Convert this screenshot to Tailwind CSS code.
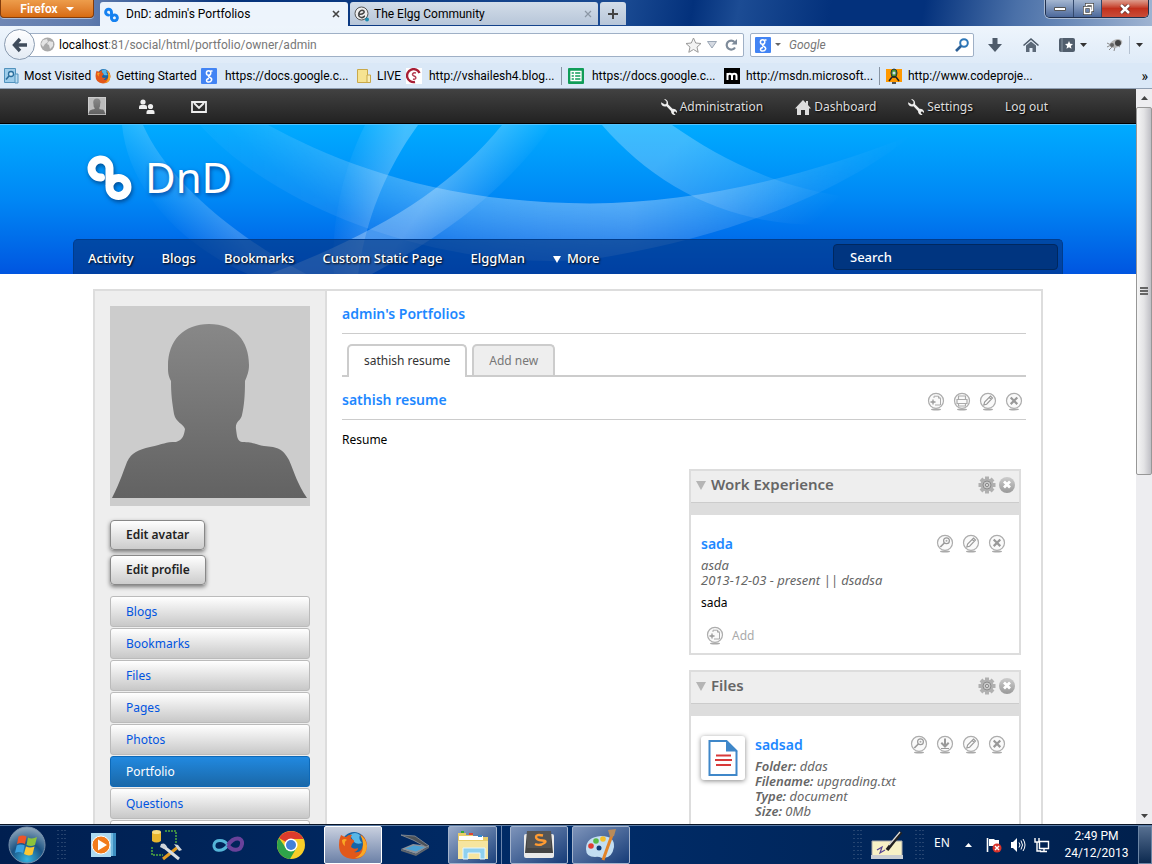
<!DOCTYPE html>
<html lang="en">
<head>
<meta charset="utf-8">
<title>DnD: admin's Portfolios</title>
<script src="https://cdn.jsdelivr.net/npm/@tailwindcss/browser@4"></script>
</head>
<body class="flex h-screen flex-col overflow-hidden bg-white font-['Noto_Sans','Open_Sans',sans-serif] text-[12px] text-black">

<svg width="0" height="0" class="absolute" aria-hidden="true">
  <defs>
    <linearGradient id="person" x1="0" y1="0" x2="0" y2="1"><stop offset="0" stop-color="#888"/><stop offset="1" stop-color="#626262"/></linearGradient>
    <linearGradient id="ball" x1="0" y1="0" x2="0" y2="1"><stop offset="0" stop-color="#ccc"/><stop offset="1" stop-color="#999"/></linearGradient>
    <symbol id="avatar" viewBox="0 0 200 200"><path fill="url(#person)" d="M2 192C11 174 13 166 17 156C22 146 28 144 40 141C54 138 55 136 66 136C73 134 74 129 75 123C73 117 66 117 64 108C62 96 61 88 61 75C58 69 58 66 58 60C58 34 74 18 99 18C125 18 139 35 139 59C139 66 137 70 135 75C135 90 134 100 132 109C131 115 125 115 126 123C127 130 127 135 132 136C142 136 145 138 154 140C168 141 173 143 179 154C185 168 187 177 197 192Z"/></symbol>
    <symbol id="disc" viewBox="0 0 18 20"><ellipse cx="9" cy="17.400" rx="5" ry="1" fill="#aaa"/><circle cx="9" cy="8.800" r="7.500" fill="#fafafa" stroke="#adadad" stroke-width="1.200"/></symbol>
    <symbol id="a-add" viewBox="0 0 18 20"><use href="#disc"/><path d="M7 6V4.200h4.500l2 2V13H8M11.500 4.200v2h2" fill="none" stroke="#aaa"/><path d="M3.500 10h5M6 7.500v5" stroke="#999" stroke-width="1.300"/></symbol>
    <symbol id="a-print" viewBox="0 0 18 20"><use href="#disc"/><path d="M5.500 7V4h7v3M4 7.500h10v4H4zM5.500 11.500V14h7v-2.500" fill="none" stroke="#aaa" stroke-width="1.200"/></symbol>
    <symbol id="a-edit" viewBox="0 0 18 20"><use href="#disc"/><path d="M4.800 13l.8-3L11.500 4l2 2L7.600 12.200zM10.200 5.400l2 2" fill="none" stroke="#999" stroke-width="1.100"/></symbol>
    <symbol id="a-del" viewBox="0 0 18 20"><use href="#disc"/><path d="M5.700 5.500l6.600 6.600M12.300 5.500l-6.600 6.600" stroke="#999" stroke-width="2.200"/></symbol>
    <symbol id="a-view" viewBox="0 0 18 20"><use href="#disc"/><circle cx="10.500" cy="6.800" r="2.900" fill="none" stroke="#999" stroke-width="1.200"/><circle cx="10.500" cy="6.800" r="1" fill="#aaa"/><path d="M8.300 9l-4 4" stroke="#999" stroke-width="1.600"/></symbol>
    <symbol id="a-down" viewBox="0 0 18 20"><use href="#disc"/><path d="M9 3.500V11M5.300 7.800L9 11.500l3.700-3.700" fill="none" stroke="#999" stroke-width="2"/><path d="M5 13.500h8" stroke="#999"/></symbol>
    <symbol id="gear" viewBox="0 0 18 18"><g fill="#b0b0b0"><circle cx="9" cy="9" r="6.500"/><path d="M7 .5h4v17H7zM.5 7h17v4H.5z"/><path d="M7 .5h4v17H7zM.5 7h17v4H.5z" transform="rotate(45 9 9)"/></g><circle cx="9" cy="9" r="4" fill="#c8c8c8" stroke="#8d8d8d"/><circle cx="9" cy="9" r="1.600" fill="#ddd" stroke="#888"/></symbol>
    <symbol id="close" viewBox="0 0 18 18"><circle cx="9" cy="9" r="8" fill="url(#ball)"/><path d="M6 5.500l6 6M12 5.500l-6 6" stroke="#fff" stroke-width="2.800"/></symbol>
    <symbol id="wrench" viewBox="0 0 16 16"><path fill="#eee" d="M3 0l2.500 2.500v2L4 5.500 0 3.200C0 7 3 8 5.500 7.200L10 12c0 3 2.500 4.500 4.500 3.800L12.800 14l.2-1.300 1.300-.3 1.700 1.700c.5-2.500-1.500-4.500-4.500-4.300L7 5.300C7.700 2.500 5.700 0 3 0z"/></symbol>
    <symbol id="google" viewBox="0 0 16 16"><rect width="16" height="16" rx="1" fill="#4284f4"/><g fill="none" stroke="#fff" stroke-width="1.500"><ellipse cx="7.600" cy="5" rx="2.200" ry="2.300"/><path d="M9.500 3h2M9 7c-2 1-2 1.500 0 2.500C12 11 10.500 14 7.800 14 5 14 4.500 11 8 10.500"/></g></symbol>
    <symbol id="firefox" viewBox="0 0 30 30"><circle cx="16" cy="14" r="12" fill="#1565a8"/><path d="M12 5q5-4 10 0-2 4 2 8-5 2-8-1z" fill="#58b7e8"/><path fill="#e2581a" d="M3 5Q6 7 8 7Q11 4 14 5Q12 7 13 9Q17 10 16 12Q13 14 13 17Q16 20 20 18Q20 21 16 22Q24 24 25 14Q25 8 22 4Q29 8 29 16Q28 29 15 29Q1 28 1 15Q1 9 3 5Z"/><path fill="#f9a825" d="M29 16q-1 12-12 12 8-3 8-13 0-6-3-10 6 3 7 11zM4 10q3-2 5 0-3 1-2 6-3-2-3-6z"/></symbol>
    <symbol id="grip" viewBox="0 0 9 30"><g stroke="#4a6588" stroke-width="1" stroke-dasharray="1 3"><path d="M1 0v30M5 0v30M8 0v30"/></g></symbol>
  </defs>
</svg>

<!-- browser title bar and tabs -->
<div class="flex h-[26px] shrink-0 items-start bg-[linear-gradient(100deg,#6f87b4_0%,#5f7bad_8%,#04317a_20%,#1a4a92_54%,#03317c_60%,#1c4c94_64%,#03317c_72%,#03317c_80%,#4a70a8_88%,#9fb4d2_100%)] font-[Roboto,'Noto_Sans',sans-serif]">
  <button class="flex h-[18px] w-[94px] items-center justify-center gap-2 rounded-b-[4px] border border-t-0 border-[#833c0c] bg-linear-to-b from-[#ed9d4b] to-[#d76b0e] text-[12px] font-semibold text-white shadow-[0_1px_0_#aabbd8]">Firefox
    <svg class="h-1 w-2" viewBox="0 0 8 4"><path d="M0 0h8L4 4z" fill="#fff"/></svg></button>
  <div class="ml-[6px] mt-[2px] flex h-6 w-[248px] items-center gap-[7px] rounded-t-[3px] bg-[#edf4fc] pl-1 pr-2">
    <svg class="size-[15px]" viewBox="0 0 46 46"><path d="M14 25A9 9 0 1 1 23 16V32M23 32A9 9 0 1 0 23.200 31" fill="none" stroke="#1581f0" stroke-width="9" stroke-linecap="round"/></svg>
    <span class="flex-1 whitespace-nowrap">DnD: admin's Portfolios</span>
    <button aria-label="Close tab"><svg class="size-2" viewBox="0 0 8 8"><path d="M1 1l6 6M7 1L1 7" stroke="#444" stroke-width="1.600"/></svg></button>
  </div>
  <div class="ml-[2px] mt-[2px] flex h-[23px] w-[248px] items-center gap-1 rounded-t-[3px] bg-linear-to-b from-[#d3dde9] to-[#b7c6d9] pl-1 pr-[6px]">
    <svg class="size-4" viewBox="0 0 16 16"><circle cx="7.500" cy="7.500" r="6.500" fill="#eee" stroke="#555"/><path d="M4 8c5 1 8-2 5-3.500S3 9 6 11s4-1 5-1" fill="none" stroke="#444" stroke-width="1.500"/><circle cx="13" cy="13.500" r="2" fill="#1c8cb0"/></svg>
    <span class="flex-1 whitespace-nowrap">The Elgg Community</span>
    <button aria-label="Close tab"><svg class="size-2" viewBox="0 0 8 8"><path d="M1 1l6 6M7 1L1 7" stroke="#8b97a5" stroke-width="1.200"/></svg></button>
  </div>
  <button aria-label="New tab" class="ml-[2px] mt-[2px] flex h-[23px] w-[26px] items-center justify-center rounded-t-[3px] bg-linear-to-b from-[#d3dde9] to-[#b7c6d9]"><svg class="size-[10px]" viewBox="0 0 10 10"><path d="M5 0v10M0 5h10" stroke="#444" stroke-width="2"/></svg></button>
  <div class="ml-auto mr-[3px] flex h-[18px] overflow-hidden rounded-b-[5px] border border-t-0 border-[#20304d] shadow-[0_0_0_1px_#a9bad3]">
    <button aria-label="Minimize" class="flex w-7 items-center justify-center border-r border-[#33486b] bg-linear-to-b from-[#a5b7d1] to-[#4c689a]"><svg class="h-1 w-3" viewBox="0 0 12 4"><path d="M.5.500h11v3H.5z" fill="#fff" stroke="#555"/></svg></button>
    <button aria-label="Restore" class="flex w-7 items-center justify-center border-r border-[#33486b] bg-linear-to-b from-[#a5b7d1] to-[#4c689a]"><svg class="size-3" viewBox="0 0 12 12"><path d="M4.500 3V1.500h6v6H9M2.500 4.500h6v6h-6z" fill="none" stroke="#444" stroke-width="3"/><path d="M4.500 3V1.500h6v6H9M2.500 4.500h6v6h-6z" fill="none" stroke="#fff" stroke-width="1.600"/></svg></button>
    <button aria-label="Close" class="flex w-[46px] items-center justify-center bg-linear-to-b from-[#dc9c8d] via-[#c2301c] via-50% to-[#c94c38]"><svg class="h-[10px] w-3" viewBox="0 0 12 10"><path d="M2 1l8 8M10 1L2 9" stroke="#5a2a26" stroke-width="4"/><path d="M2 1l8 8M10 1L2 9" stroke="#fff" stroke-width="2.500"/></svg></button>
  </div>
</div>

<!-- navigation toolbar -->
<div class="flex h-[37px] shrink-0 items-center bg-linear-to-b from-[#eef5fc] to-[#dfebf8] pl-1 pr-[9px] font-[Roboto,'Noto_Sans',sans-serif]">
  <button aria-label="Back" class="z-10 flex size-[31px] shrink-0 items-center justify-center rounded-full border border-[#8a9bb0] bg-linear-to-b from-white to-[#e3ebf4]"><svg class="h-4 w-4" viewBox="0 0 16 16"><path d="M15 8H3M8 2L2.500 8 8 14" fill="none" stroke="#3f4c5b" stroke-width="3.400"/></svg></button>
  <div class="-ml-2 flex h-6 min-w-0 flex-1 items-center rounded-[2px] border border-[#9fb0c6] bg-white pl-[12px] pr-[6px]">
    <svg class="mr-1 size-[15px] shrink-0" viewBox="0 0 15 15"><circle cx="7.500" cy="7.500" r="7" fill="#aaa"/><path d="M3 3l4-1 1 3-3 2-2 3-2-3zM9 4l4 1v4l-3 3-1-4-2-1z" fill="#e4e4e4"/></svg>
    <label for="url" class="leading-5">localhost</label>
    <input id="url" class="h-5 w-0 flex-1 text-[12px] leading-5 text-[#777] outline-none" value=":81/social/html/portfolio/owner/admin">
    <svg class="h-4 w-[17px]" viewBox="0 0 17 16"><path d="M8.500 1l2.200 5 5.300.500-4 3.600 1.200 5.200-4.700-2.800-4.700 2.800L5 10.100 1 6.500 6.300 6z" fill="#f3f3f3" stroke="#999"/></svg>
    <svg class="ml-[5px] h-2 w-[10px]" viewBox="0 0 10 8"><path d="M.5.500h9L5 7z" fill="#d5dae2" stroke="#9aa6b5"/></svg>
    <svg class="ml-2 h-3 w-3" viewBox="0 0 12 12"><path d="M10 8.500A4.500 4.500 0 1 1 9.500 3" fill="none" stroke="#7e8b9a" stroke-width="2.200"/><path d="M12 0v5.500H6.500z" fill="#7e8b9a"/></svg>
  </div>
  <div class="ml-[6px] flex h-6 w-[224px] items-center rounded-[2px] border border-[#9fb0c6] bg-white pl-1 pr-1">
    <svg class="size-4"><use href="#google"/></svg>
    <svg class="ml-1 h-[3px] w-[6px]" viewBox="0 0 6 3"><path d="M0 0h6L3 3z" fill="#666"/></svg>
    <input aria-label="Search with Google" placeholder="Google" class="ml-2 w-0 flex-1 text-[12px] italic outline-none placeholder:text-[#777]">
    <svg class="size-[14px]" viewBox="0 0 14 14"><circle cx="9" cy="5" r="3.800" fill="none" stroke="#2e77b8" stroke-width="2"/><path d="M6 8l-5 5" stroke="#2c5f95" stroke-width="2.600"/></svg>
  </div>
  <svg class="ml-[14px] h-[14px] w-[14px]" viewBox="0 0 14 14"><path d="M4.500 0h5v6H14l-7 8-7-8h4.500z" fill="#4e5b6a"/></svg>
  <svg class="ml-[21px] h-[14px] w-4" viewBox="0 0 16 14"><path d="M8 0l8 7-1 1-7-6-7 6-1-1z" fill="#4e5b6a"/><path d="M3 7.500L8 3.500l5 4V14H9.500v-4h-3v4H3z" fill="#5c6978"/></svg>
  <svg class="ml-[20px] h-[14px] w-4" viewBox="0 0 16 14"><rect width="16" height="14" rx="2" fill="#515e6d"/><path d="M3 0v14" stroke="#8b97a5"/><path d="M10 3l1.200 2.700 2.800.300-2.100 1.900.6 2.900-2.500-1.500-2.500 1.500.6-2.900L6 6l2.800-.3z" fill="#fff"/></svg>
  <svg class="ml-[5px] h-1 w-[7px]" viewBox="0 0 7 4"><path d="M0 0h7L3.500 4z" fill="#333"/></svg>
  <svg class="ml-[19px] h-[14px] w-[17px]" viewBox="0 0 17 14"><path d="M1 5l4 2-4 2M3 12l4-4M8 13l1-4M14 9l-3-2" stroke="#888" fill="none"/><ellipse cx="10" cy="5.500" rx="6.500" ry="4" transform="rotate(-20 10 5.500)" fill="#b5b5b5"/><circle cx="12" cy="5" r="3" fill="#444"/><circle cx="6" cy="7" r="2" fill="#666"/></svg>
  <span class="ml-[6px] h-[18px] w-px bg-[#b5c2d2]"></span>
  <svg class="ml-[6px] h-1 w-[7px]" viewBox="0 0 7 4"><path d="M0 0h7L3.500 4z" fill="#333"/></svg>
</div>

<!-- bookmarks toolbar -->
<div class="flex h-[26px] shrink-0 items-center whitespace-nowrap border-b border-[#8f9fb3] bg-[#dae8f7] pl-1 pr-1 font-[Roboto,'Noto_Sans',sans-serif] text-[12px]">
  <a href="#" class="flex w-[91px] items-center gap-1"><svg class="size-4 shrink-0" viewBox="0 0 16 16"><path d="M.5.500h11v14H.5z" fill="#9dccea" stroke="#5192bd"/><path d="M11 6h3v9h-3z" fill="#b9dcf1" stroke="#5192bd"/><circle cx="7" cy="6" r="2.500" fill="#d6ecf9" stroke="#2a6d9c" stroke-width="1.300"/><path d="M5 8l-3 3.500" stroke="#2a6d9c" stroke-width="1.600"/></svg>Most Visited</a>
  <a href="#" class="flex w-[106px] items-center gap-[5px]"><svg class="size-4 shrink-0"><use href="#firefox"/></svg>Getting Started</a>
  <a href="#" class="flex w-[156px] items-center gap-2"><svg class="size-4 shrink-0"><use href="#google"/></svg>https://docs.google.c...</a>
  <a href="#" class="flex w-[49px] items-center gap-[6px]"><svg class="h-4 w-[14px] shrink-0" viewBox="0 0 14 16"><path d="M.5 1.500h10v13H.5z" fill="#f6e391" stroke="#c9a94a"/><path d="M10 7h3.500v7.500H10z" fill="#f9edb5" stroke="#c9a94a"/></svg>LIVE</a>
  <a href="#" class="flex w-[156px] items-center gap-[7px] border-r border-[#8794a3]"><svg class="size-4 shrink-0" viewBox="0 0 16 16"><rect width="16" height="16" fill="#fff"/><path d="M13.500 5A6.500 6.500 0 1 0 9 14" fill="none" stroke="#a81e35" stroke-width="2.400"/><path d="M10 5c-3-1-5 2-2 3s2 4-1 3" fill="none" stroke="#b54155" stroke-width="1.500"/></svg>http://vshailesh4.blog...</a>
  <a href="#" class="flex w-[162px] items-center gap-2 pl-[6px]"><svg class="size-4 shrink-0" viewBox="0 0 16 16"><rect width="16" height="16" rx="1" fill="#109d58"/><path d="M3 3.500h10v9H3zM3 6.500h10M3 9.500h10M6.500 3.500v9" fill="none" stroke="#fff" stroke-width="1.300"/></svg>https://docs.google.c...</a>
  <a href="#" class="flex w-[156px] items-center gap-[6px] border-r border-[#8794a3]"><svg class="size-4 shrink-0" viewBox="0 0 16 16"><rect width="16" height="16" fill="#000"/><path d="M3.500 12V5M3.500 8c0-3 4.500-3 4.500 0v4M8 8c0-3 4.500-3 4.500 0v4" fill="none" stroke="#fff" stroke-width="2"/></svg>http://msdn.microsoft...</a>
  <a href="#" class="flex items-center gap-[6px] pl-[6px]"><svg class="size-4 shrink-0" viewBox="0 0 16 16"><rect y="1" width="16" height="13" fill="#f90"/><ellipse cx="8" cy="5" rx="3" ry="4" fill="#4c9a35" stroke="#234"/><circle cx="8" cy="5" r="1.500" fill="#cde"/><path d="M3 13l3-4h4l3 4M6 15h4" stroke="#222" stroke-width="1.500" fill="none"/></svg>http://www.codeproje...</a>
  <button class="ml-auto text-[14px] leading-4" aria-label="More bookmarks">»</button>
</div>

<!-- viewport -->
<div class="flex min-h-0 flex-1">
 <div class="min-w-0 flex-1 overflow-hidden text-[12px]">
  <nav class="h-[35px] border-b border-black bg-linear-to-b from-[#424242] to-[#222]">
    <div class="mx-auto flex h-full max-w-[990px] items-center px-[15px] pt-[2px] text-[#ddd] [text-shadow:1px_1px_2px_#000]">
      <a href="#" aria-label="Profile"><svg class="mb-[2px] size-[18px] bg-[#ccc]"><rect x="1" y="1" width="16" height="16" fill="#bbb"/><use href="#avatar"/></svg></a>
      <a href="#" aria-label="Friends" class="ml-8"><svg class="h-4 w-[17px]" viewBox="0 0 17 16"><g fill="#eee"><circle cx="5" cy="3" r="2.600"/><path d="M1 10V8q0-2 2-2h4q2 0 2 2v2z"/><circle cx="12.500" cy="7.500" r="2.600"/><path d="M8.500 15v-2q0-2 2-2h4q2 0 2 2v2z"/></g></svg></a>
      <a href="#" aria-label="Messages" class="ml-9"><svg class="h-3 w-4" viewBox="0 0 16 12"><path d="M1 1h14v10H1zM3 2l5 5 5-5" fill="none" stroke="#eee" stroke-width="1.800"/></svg></a>
      <div class="ml-auto flex items-center gap-8">
        <a href="#" class="flex items-center gap-[3px]"><svg class="size-4"><use href="#wrench"/></svg>Administration</a>
        <a href="#" class="flex items-center gap-[3px]"><svg class="h-[15px] w-4" viewBox="0 0 16 15"><path d="M8 0l3 3V1h2v4l3 3.500h-2V15h-4v-5H6v5H2V8.500H0z" fill="#ddd"/></svg>Dashboard</a>
        <a href="#" class="flex items-center gap-[3px]"><svg class="size-4"><use href="#wrench"/></svg>Settings</a>
        <a href="#">Log out</a>
      </div>
    </div>
  </nav>

  <header class="relative flex h-[150px] flex-col justify-between overflow-hidden border-t border-[#55c4ff] bg-linear-to-b from-[#00abff] via-[#0087f5] via-50% to-[#0055e0]">
    <svg class="absolute left-1/2 top-0 h-[150px] w-[1136px] -translate-x-1/2" viewBox="0 0 1136 150" aria-hidden="true">
      <defs>
        <linearGradient id="ga" gradientUnits="userSpaceOnUse" x1="215" y1="0" x2="910" y2="0"><stop offset="0" stop-color="#fff" stop-opacity=".1"/><stop offset=".3" stop-color="#fff" stop-opacity=".3"/><stop offset=".6" stop-color="#fff" stop-opacity=".36"/><stop offset="1" stop-color="#fff" stop-opacity="0"/></linearGradient>
        <radialGradient id="gf" gradientUnits="userSpaceOnUse" cx="590" cy="-400" r="545"><stop offset=".86" stop-color="#fff"/><stop offset="1" stop-color="#555"/></radialGradient>
        <mask id="ma" maskUnits="userSpaceOnUse" x="0" y="0" width="1136" height="150"><path fill="url(#gf)" d="M0 0h1136v150H0z"/></mask>
        <linearGradient id="gb" gradientUnits="userSpaceOnUse" x1="690" y1="10" x2="790" y2="120"><stop offset="0" stop-color="#fff" stop-opacity=".24"/><stop offset="1" stop-color="#fff" stop-opacity="0"/></linearGradient>
        <linearGradient id="gc" gradientUnits="userSpaceOnUse" x1="438" y1="60" x2="490" y2="96"><stop offset="0" stop-color="#fff" stop-opacity=".28"/><stop offset="1" stop-color="#fff" stop-opacity="0"/></linearGradient>
        <linearGradient id="gd" gradientUnits="userSpaceOnUse" x1="398" y1="50" x2="340" y2="40"><stop offset="0" stop-color="#fff" stop-opacity=".26"/><stop offset="1" stop-color="#fff" stop-opacity="0"/></linearGradient>
        <linearGradient id="ge" gradientUnits="userSpaceOnUse" x1="210" y1="76" x2="172" y2="106"><stop offset="0" stop-color="#fff" stop-opacity=".2"/><stop offset="1" stop-color="#fff" stop-opacity="0"/></linearGradient>
      </defs>
      <path mask="url(#ma)" fill="url(#ga)" d="M268 0C335 36 435 78 590 78.500C700 78 810 50 912 10C850 62 740 110 600 133C460 150 280 90 200 0Z"/>
      <path fill="url(#gb)" d="M672 0C735 44 820 86 952 74C800 130 680 90 602 0Z"/>
      <path fill="url(#gc)" d="M502 0C450 64 375 110 267 150H370C450 108 510 60 552 0Z"/>
      <path fill="url(#gd)" d="M418 0C382 50 365 100 358 150H334C330 95 345 40 365 0Z"/>
      <path fill="url(#ge)" d="M143 0C165 50 225 106 308 150H250C175 118 128 60 122 0Z"/>
    </svg>
    <div class="relative mx-auto w-full max-w-[990px] px-3 pt-6">
      <a href="#" class="flex items-center gap-[10px] text-white">
        <svg class="size-[50px] drop-shadow-[1px_2px_2px_rgba(0,30,80,0.6)]" viewBox="0 0 50 50"><path d="M16 25.500A9 9 0 1 1 24.500 16V35A9 9 0 1 0 33.500 26Q27 26 24.500 33" fill="none" stroke="#fff" stroke-width="8" stroke-linecap="round"/></svg>
        <h1 class="text-[42px] leading-[56px] [text-shadow:1px_2px_4px_#03449b]">DnD</h1>
      </a>
    </div>
    <div class="relative mx-auto flex h-[35px] w-full max-w-[990px] items-center justify-between rounded-t-[5px] border border-b-0 border-[#003c8c] bg-[#00327a]/60 pl-[14px] pr-1">
      <ul class="flex gap-[28px] whitespace-nowrap pt-1 text-[13px] font-medium text-white [text-shadow:1px_1px_2px_#000]">
        <li><a href="#">Activity</a></li><li><a href="#">Blogs</a></li><li><a href="#">Bookmarks</a></li><li><a href="#">Custom Static Page</a></li><li><a href="#">ElggMan</a></li>
        <li><a href="#" class="flex items-center gap-[6px]"><svg class="h-[7px] w-2" viewBox="0 0 8 7"><path d="M0 0h8L4 7z" fill="#fff"/></svg>More</a></li>
      </ul>
      <input aria-label="Search" placeholder="Search" class="h-[26px] w-[225px] rounded-[4px] border border-[#00285f] bg-[#003580] px-4 text-[13px] font-medium outline-none placeholder:text-white">
    </div>
  </header>

  <div class="mx-auto mt-[15px] flex max-w-[950px] border-2 border-[#ddd]">
    <aside class="w-[232px] shrink-0 border-r-2 border-[#ddd] bg-[#eee] p-[15px]">
      <svg class="size-[200px] bg-[#ccc]" role="img" aria-label="admin"><use href="#avatar"/></svg>
      <div class="mt-[14px] flex flex-col items-start gap-[5px]">
        <button class="h-[30px] rounded-[4px] border border-[#888] bg-linear-to-b from-white to-[#ccc] px-[15px] font-semibold text-[#222] shadow-[0_2px_4px_#777]">Edit avatar</button>
        <button class="h-[30px] rounded-[4px] border border-[#888] bg-linear-to-b from-white to-[#ccc] px-[15px] font-semibold text-[#222] shadow-[0_2px_4px_#777]">Edit profile</button>
      </div>
      <ul class="mt-[11px] flex flex-col gap-px leading-[29px] text-[#0054e0] *:rounded-[3px] *:border *:border-[#bbb] *:bg-linear-to-b *:from-white *:to-[#c8c8c8] *:px-[15px]">
        <li><a href="#">Blogs</a></li><li><a href="#">Bookmarks</a></li><li><a href="#">Files</a></li><li><a href="#">Pages</a></li><li><a href="#">Photos</a></li>
        <li class="border-[#0d69b8]! from-[#2189e0]! to-[#1a68a8]! text-white"><a href="#">Portfolio</a></li>
        <li><a href="#">Questions</a></li><li class="h-[31px]"></li>
      </ul>
    </aside>

    <main class="min-w-0 flex-1 px-[15px] pt-[10px]">
      <h2 class="h-[33px] border-b border-[#ccc] text-[14px] font-semibold leading-[26px] text-[#1e88ff]">admin's Portfolios</h2>
      <div class="mt-[10px] flex h-[33px] items-end gap-[5px] border-b-2 border-[#ccc] pl-[5px]">
        <a href="#" class="-mb-[2px] h-[33px] rounded-t-[5px] border-2 border-b-0 border-[#ccc] bg-white px-[15px] leading-[29px] text-[#333]">sathish resume</a>
        <a href="#" class="h-[31px] rounded-t-[5px] border-2 border-b-0 border-[#ccc] bg-[#eee] px-[15px] leading-[29px] text-[#777]">Add new</a>
      </div>
      <div class="mt-[10px] flex h-[33px] items-start justify-between border-b border-[#ccc]">
        <h3 class="text-[14px] font-semibold leading-[26px] text-[#1e88ff]">sathish resume</h3>
        <div class="mr-[3px] mt-[5px] flex gap-2">
          <button aria-label="Add"><svg class="h-5 w-[18px]"><use href="#a-add"/></svg></button>
          <button aria-label="Print"><svg class="h-5 w-[18px]"><use href="#a-print"/></svg></button>
          <button aria-label="Edit"><svg class="h-5 w-[18px]"><use href="#a-edit"/></svg></button>
          <button aria-label="Delete"><svg class="h-5 w-[18px]"><use href="#a-del"/></svg></button>
        </div>
      </div>
      <p class="mt-[10px] leading-5">Resume</p>

      <div class="ml-auto mr-[5px] mt-[19px] flex w-[332px] flex-col gap-[15px]">
        <section class="border-2 border-[#ddd]">
          <div class="flex h-8 items-center border-b border-[#ccc] bg-[#eee] pl-[5px] pr-[3px]">
            <svg class="mb-[3px] h-[9px] w-[10px]" viewBox="0 0 10 9"><path d="M0 0h10L5 9z" fill="#b5b5b5"/></svg>
            <h3 class="ml-[5px] flex-1 pb-1 text-[15px] font-semibold text-[#666]">Work Experience</h3>
            <button aria-label="Settings" class="pb-1"><svg class="size-[18px]"><use href="#gear"/></svg></button>
            <button aria-label="Remove" class="ml-[2px] pb-1"><svg class="size-[18px]"><use href="#close"/></svg></button>
          </div>
          <div class="h-3 bg-[#ddd]"></div>
          <div class="px-[10px] pb-[7px] pt-[18px]">
            <div class="flex justify-between">
              <h4 class="text-[14px] font-semibold leading-[22px] text-[#1e88ff]">sada</h4>
              <div class="mr-[3px] flex gap-2">
                <button aria-label="View"><svg class="h-5 w-[18px]"><use href="#a-view"/></svg></button>
                <button aria-label="Edit"><svg class="h-5 w-[18px]"><use href="#a-edit"/></svg></button>
                <button aria-label="Delete"><svg class="h-5 w-[18px]"><use href="#a-del"/></svg></button>
              </div>
            </div>
            <p class="mt-[3px] text-[13px] italic leading-[15px] text-[#666]">asda<br>2013-12-03 - present || dsadsa</p>
            <p class="mt-[5px] leading-5">sada</p>
            <a href="#" class="mt-[13px] flex items-center gap-2 pl-[5px] text-[#aaa]"><svg class="h-5 w-[18px]"><use href="#a-add"/></svg>Add</a>
          </div>
        </section>
        <section class="border-2 border-[#ddd]">
          <div class="flex h-8 items-center border-b border-[#ccc] bg-[#eee] pl-[5px] pr-[3px]">
            <svg class="mb-[3px] h-[9px] w-[10px]" viewBox="0 0 10 9"><path d="M0 0h10L5 9z" fill="#b5b5b5"/></svg>
            <h3 class="ml-[5px] flex-1 pb-1 text-[15px] font-semibold text-[#666]">Files</h3>
            <button aria-label="Settings" class="pb-1"><svg class="size-[18px]"><use href="#gear"/></svg></button>
            <button aria-label="Remove" class="ml-[2px] pb-1"><svg class="size-[18px]"><use href="#close"/></svg></button>
          </div>
          <div class="h-3 bg-[#ddd]"></div>
          <div class="flex px-[10px] pb-5 pt-[18px]">
            <div class="mr-[10px] mt-[2px] flex size-11 items-center justify-center rounded-[3px] bg-white shadow-[0_1px_5px_#888]"><svg class="h-9 w-[30px]" viewBox="0 0 30 36"><path d="M1.500 1h17l10 10v24h-27z" fill="#fff" stroke="#3f87c9" stroke-width="2"/><path d="M18 0l11.500 11.500H18z" fill="#3f87c9"/><path d="M8 15.500h15M7 20h17M8 25h15" stroke="#d83a3a" stroke-width="2"/></svg></div>
            <div class="flex-1">
              <div class="flex justify-between">
                <h4 class="text-[14px] font-semibold leading-[22px] text-[#1e88ff]">sadsad</h4>
                <div class="mr-[3px] flex gap-2">
                  <button aria-label="View"><svg class="h-5 w-[18px]"><use href="#a-view"/></svg></button>
                  <button aria-label="Download"><svg class="h-5 w-[18px]"><use href="#a-down"/></svg></button>
                  <button aria-label="Edit"><svg class="h-5 w-[18px]"><use href="#a-edit"/></svg></button>
                  <button aria-label="Delete"><svg class="h-5 w-[18px]"><use href="#a-del"/></svg></button>
                </div>
              </div>
              <p class="mt-[3px] text-[13px] italic leading-[15px] text-[#666]"><b class="font-semibold">Folder:</b> ddas<br><b class="font-semibold">Filename:</b> upgrading.txt<br><b class="font-semibold">Type:</b> document<br><b class="font-semibold">Size:</b> 0Mb</p>
            </div>
          </div>
        </section>
      </div>
    </main>
  </div>
 </div>

 <!-- page scrollbar -->
 <div class="flex w-4 shrink-0 flex-col bg-[#ededf0]" aria-hidden="true">
   <div class="flex h-[18px] items-center justify-center"><svg class="h-1 w-[7px]" viewBox="0 0 7 4"><path d="M0 4h7L3.500 0z" fill="#444"/></svg></div>
   <div class="flex h-[368px] flex-col items-center justify-center gap-px rounded-[2px] border border-[#979797] bg-linear-to-r from-[#f5f5f5] via-[#e3e3e5] via-50% to-[#bfbfc5]"><i class="h-[2px] w-2 bg-[#666]"></i><i class="h-[2px] w-2 bg-[#666]"></i><i class="h-[2px] w-2 bg-[#666]"></i></div>
   <div class="mt-auto flex h-[17px] items-center justify-center"><svg class="h-1 w-[7px]" viewBox="0 0 7 4"><path d="M0 0h7L3.500 4z" fill="#444"/></svg></div>
 </div>
</div>

<!-- Windows taskbar -->
<footer class="flex h-10 shrink-0 items-center border-t border-[#0a1526] bg-linear-to-r from-[#001f50] via-[#002c69] via-50% to-[#00204d] pl-2 text-white shadow-[inset_0_1px_0_#5a7ba5]">
  <button aria-label="Start"><svg class="size-[38px]" viewBox="0 0 38 38"><defs><radialGradient id="orb" cx=".5" cy=".9" r=".9"><stop offset="0" stop-color="#35b5e0"/><stop offset=".5" stop-color="#1b5384"/><stop offset="1" stop-color="#92a9bd"/></radialGradient></defs><circle cx="19" cy="19" r="18" fill="url(#orb)" stroke="#7890ab"/><path d="M10.500 10.500q4-2 8 0L17 18q-4-2-8 0z" fill="#ee5528"/><path d="M20 11.500q4 2 9-.500L27 19q-4 2-8.500 0z" fill="#8cc33c"/><path d="M8.700 19.500q4-2 8 0L15 27q-4-2-8 0z" fill="#3aa0e0"/><path d="M18 20.500q4 2 8.500 0l-2 8q-4 2-8.500-.5z" fill="#fcc733"/></svg></button>
  <svg class="ml-[11px] h-[30px] w-[9px]"><use href="#grip"/></svg>
  <button aria-label="Media Player" class="ml-[24px]"><svg class="h-[26px] w-[27px]" viewBox="0 0 27 26"><path d="M8 1h18v23H8z" fill="#3d8fc2"/><path d="M5 1h18v23H5z" fill="#70b8df"/><path d="M1 1h20v24H1z" fill="#add9f0"/><circle cx="11" cy="13" r="9" fill="#f27b1b" stroke="#fff"/><path d="M8 7.500l9 5.500-9 5.500z" fill="#fff"/></svg></button>
  <button aria-label="Database tools" class="ml-[34px]"><svg class="h-8 w-8" viewBox="0 0 32 32"><path d="M1 3v9q4.500 3 9 0V3z" fill="#e8b52e"/><ellipse cx="5.500" cy="3" rx="4.500" ry="2" fill="#f8dd81"/><path d="M14 2h11v12M1 18v8h11" fill="none" stroke="#51ac3f" stroke-width="1.500" stroke-dasharray="2 1"/><path d="M12 30L27 18" stroke="#e29b22" stroke-width="3"/><path d="M12 17l16 13" stroke="#d8dde2" stroke-width="3"/><path d="M10 15q4-2 6 3l-3 2-4-2zM23 15l4 1 4 5-3 1z" fill="#cdd3d9"/></svg></button>
  <button aria-label="Visual Studio" class="ml-[29px]"><svg class="h-[18px] w-8" viewBox="0 0 32 18"><path d="M16 9C12 3 3 3 2 9s8 8 14 0" fill="none" stroke="#55b5d8" stroke-width="3"/><path d="M16 9C22 0 31 1 30 8s-10 8-14 1" fill="none" stroke="#69429a" stroke-width="4"/></svg></button>
  <button aria-label="Chrome" class="ml-[33px]"><svg class="size-7" viewBox="0 0 28 28"><circle cx="14" cy="14" r="14" fill="#f8ce28"/><path d="M14 14L2 7A14 14 0 0 1 26.500 8H14z" fill="#dc3b2c"/><path d="M1.900 7A14 14 0 0 0 13 28l6.500-11H9z" fill="#2fa34a"/><circle cx="14" cy="14" r="6.500" fill="#fff"/><circle cx="14" cy="14" r="5" fill="#4380d8"/></svg></button>
  <button aria-label="Firefox" class="ml-[19px] flex h-[38px] w-[58px] items-center justify-center rounded-[2px] border border-white bg-linear-to-b from-[#c9d0df] to-[#6c81a7]"><svg class="size-[30px]"><use href="#firefox"/></svg></button>
  <button aria-label="Scanner" class="ml-[18px]"><svg class="h-[22px] w-[30px]" viewBox="0 0 30 22"><path d="M1 15l12-5 16 2-13 8z" fill="#8b9299"/><path d="M1 15v2l15 5 13-8v-2l-13 8z" fill="#5f666d"/><path d="M5 14.500l9-3 11 1.500-9 4.500z" fill="#4aa1d5"/><path d="M1 1l14 1 14 10-3 1-13-7z" fill="#4d5359" stroke="#8b9299" stroke-width=".8"/></svg></button>
  <div class="ml-[18px] flex h-[38px] w-[54px] border-r border-[#6b85ad] pr-1"><button aria-label="Explorer" class="flex w-full items-center justify-center rounded-[2px] border border-[#a3b3cc] bg-linear-to-br from-[#9aabc9] to-[#1b427d]"><svg class="h-[30px] w-8" viewBox="0 0 32 30"><path d="M1 3h8v2h7v2h15v22H1z" fill="#e8cc68"/><path d="M2 6h24v4H2z" fill="#fff"/><path d="M4 1h3v2H4z" fill="#3a3"/><path d="M12 3h4v2h-4z" fill="#d43"/><path d="M21 5h4v2h-4z" fill="#38c"/><path d="M1 11h30v18H1z" fill="#f6e59f"/><path d="M6 29V18h22v11h-5v-6H11v6z" fill="#8fd0ef" stroke="#e5f6ff"/></svg></button></div>
  <button aria-label="Sublime Text" class="ml-2 flex h-[38px] w-[58px] items-center justify-center rounded-[2px] border border-[#a3b3cc] bg-linear-to-br from-[#7e94ba] to-[#163c78]"><svg class="h-[27px] w-[30px]" viewBox="0 0 30 27"><rect y="3" width="30" height="24" rx="2" fill="#e9e9e9"/><path d="M3 0h24l2 22H1z" fill="#444"/><path d="M3 0h24v17H3z" fill="#555"/><path d="M19 4.500Q12 3 12 6T18.500 9.500T17.500 13.500Q14 14.500 11 13" fill="none" stroke="#ff9b32" stroke-width="2.400"/></svg></button>
  <button aria-label="Paint" class="ml-1 flex h-[38px] w-[58px] items-center justify-center rounded-[2px] border border-[#a3b3cc] bg-linear-to-br from-[#7e94ba] to-[#163c78]"><svg class="h-[32px] w-[32px]" viewBox="0 0 32 32"><path d="M1 20Q1 8 16 7q14 0 13 11-2 12-12 11-4-2-7-1-9 0-9-8z" fill="#c3def2"/><circle cx="6" cy="17" r="2.800" fill="#df3b32"/><circle cx="11" cy="12" r="2.800" fill="#58b947"/><circle cx="18" cy="10" r="2.800" fill="#f4bf2b"/><circle cx="14" cy="19" r="2.500" fill="#0d3a78"/><path d="M27 6L18 31" stroke="#e28429" stroke-width="3"/><path d="M23 1l8-1-2 7-4 1z" fill="#b98b5a"/></svg></button>
  <svg class="ml-auto h-[30px] w-[9px]"><use href="#grip"/></svg>
  <svg class="ml-[9px] h-[28px] w-8" viewBox="0 0 32 28"><path d="M1 10h30v17H1z" fill="#f8f2c6" stroke="#aaa"/><path d="M0 24h32v4H0z" fill="#c9cdd1"/><path d="M6 19l5-3-2 6 5-3" fill="none" stroke="#574593" stroke-width="1.200"/><path d="M30 1L16 19" stroke="#222" stroke-width="3.500"/><path d="M29 1L18 14" stroke="#ddd" stroke-width="1.200"/></svg>
  <svg class="ml-[12px] h-[30px] w-[9px]"><use href="#grip"/></svg>
  <span class="ml-[10px] w-[31px] pb-1">EN</span>
  <svg class="h-1 w-[7px]" viewBox="0 0 7 4"><path d="M0 4h7L3.500 0z" fill="#fff"/></svg>
  <svg class="ml-[14px] size-4" viewBox="0 0 16 16"><path d="M1.500 1v14" stroke="#fff" stroke-width="1.600"/><path d="M3 2h5l1 1h4v7H8L7 9H3z" fill="#fff"/><circle cx="11" cy="11" r="4.500" fill="#d8332b"/><path d="M9 9l4 4M13 9l-4 4" stroke="#fff" stroke-width="1.400"/></svg>
  <svg class="ml-2 size-4" viewBox="0 0 16 16"><path d="M1 5h2l4-4v14l-4-4H1z" fill="#fff"/><path d="M9 5.500q2 2.500 0 5M11 3.500q3 4.500 0 9M13 2q4 6 0 12" fill="none" stroke="#fff"/></svg>
  <svg class="ml-2 size-4" viewBox="0 0 16 16"><path d="M5.500 4.500h9v7h-9zM10 12v2.500M6 14.500h7" fill="none" stroke="#fff" stroke-width="1.400"/><path d="M1 1v4h4V1M3 5v9h4" fill="none" stroke="#fff" stroke-width="1.400"/></svg>
  <div class="w-[93px] text-center font-[Roboto,'Noto_Sans',sans-serif] leading-[17px]">2:49 PM<br>24/12/2013</div>
  <button aria-label="Show desktop" class="-ml-[5px] h-[38px] w-[14px] border border-[#6b85a5] bg-linear-to-b from-[#566f90] to-[#0c2a50]"></button>
</footer>
</body>
</html>
